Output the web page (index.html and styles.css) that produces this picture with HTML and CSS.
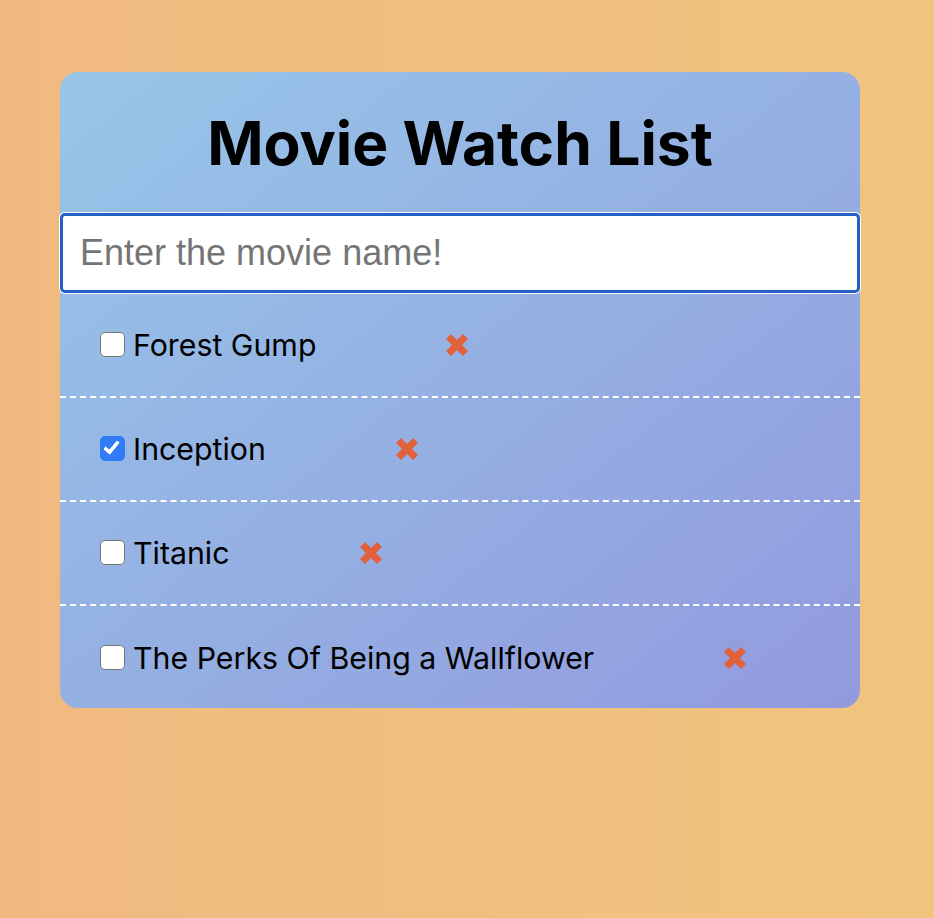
FILE: index.html
```html
<!DOCTYPE html>
<html lang="en">
<head>
<meta charset="utf-8">
<title>Movie Watch List</title>
<link rel="stylesheet" href="styles.css">
</head>
<body>
  <main class="card">
    <h1 class="title">Movie Watch List</h1>
    <input class="movie-input" type="text" placeholder="Enter the movie name!" autofocus>
    <ul class="list">
      <li class="item">
        <input class="check" type="checkbox">
        <span class="name">Forest Gump</span>
        <button class="del" aria-label="Delete"><svg viewBox="0 0 22 22" width="22" height="22"><path d="M2.5 2.5L19.5 19.5M19.5 2.5L2.5 19.5"/></svg></button>
      </li>
      <li class="item">
        <input class="check" type="checkbox" checked>
        <span class="name">Inception</span>
        <button class="del" aria-label="Delete"><svg viewBox="0 0 22 22" width="22" height="22"><path d="M2.5 2.5L19.5 19.5M19.5 2.5L2.5 19.5"/></svg></button>
      </li>
      <li class="item">
        <input class="check" type="checkbox">
        <span class="name">Titanic</span>
        <button class="del" aria-label="Delete"><svg viewBox="0 0 22 22" width="22" height="22"><path d="M2.5 2.5L19.5 19.5M19.5 2.5L2.5 19.5"/></svg></button>
      </li>
      <li class="item">
        <input class="check" type="checkbox">
        <span class="name">The Perks Of Being a Wallflower</span>
        <button class="del" aria-label="Delete"><svg viewBox="0 0 22 22" width="22" height="22"><path d="M2.5 2.5L19.5 19.5M19.5 2.5L2.5 19.5"/></svg></button>
      </li>
    </ul>
  </main>
</body>
</html>
```
FILE: styles.css
```css
html {
  margin: 0;
}
body {
  margin: 0;
  padding: 72px 0 0 60px;
  background: linear-gradient(to right, #f0b980, #f0c57e);
  font-family: Inter, "Noto Sans", sans-serif;
}
.card {
  width: 800px;
  height: 636px;
  box-sizing: border-box;
  padding-top: 41px;
  border-radius: 18px;
  background: linear-gradient(to bottom right, #97c6e8, #929ade);
  display: flex;
  flex-direction: column;
}
.card > * {
  flex-shrink: 0;
}
.title {
  margin: 0 0 39px;
  font-size: 60.5px;
  line-height: 1;
  font-weight: 700;
  text-align: center;
  color: #000;
}
.movie-input {
  box-sizing: border-box;
  width: 800px;
  height: 80px;
  margin: 0;
  padding: 0 17px;
  border: 3px solid #2361c6;
  border-radius: 5px;
  box-shadow: 0 0 0 1px #fff;
  background: #fff;
  outline: none;
  font-family: "Liberation Sans", Arial, sans-serif;
  font-size: 36px;
  color: #000;
}
.movie-input::placeholder {
  color: #757575;
}
.list {
  list-style: none;
  margin: 1px 0 0;
  padding: 0;
}
.item {
  box-sizing: border-box;
  height: 104px;
  display: flex;
  align-items: center;
  padding-left: 40px;
  border-bottom: 2px dashed #fff;
}
.item:last-child {
  border-bottom: none;
}
.check {
  appearance: none;
  -webkit-appearance: none;
  position: relative;
  box-sizing: border-box;
  width: 25px;
  height: 25px;
  margin: 0 8px 0 0;
  border: 1.5px solid #767676;
  border-radius: 5px;
  background: #fff;
}
.check:checked {
  background: #2f7cf6;
  border-color: #2f7cf6;
}
.check:checked::after {
  content: "";
  position: absolute;
  left: 6px;
  top: 1px;
  width: 5px;
  height: 12px;
  border-right: 4px solid #fff;
  border-bottom: 4px solid #fff;
  border-radius: 1px;
  transform: rotate(40deg);
}
.name {
  font-size: 30.3px;
  color: #000;
}
.del {
  margin-left: 130px;
  padding: 0;
  border: none;
  background: none;
  display: flex;
}
.del svg {
  stroke: #e2613b;
  stroke-width: 7;
  fill: none;
}
```
